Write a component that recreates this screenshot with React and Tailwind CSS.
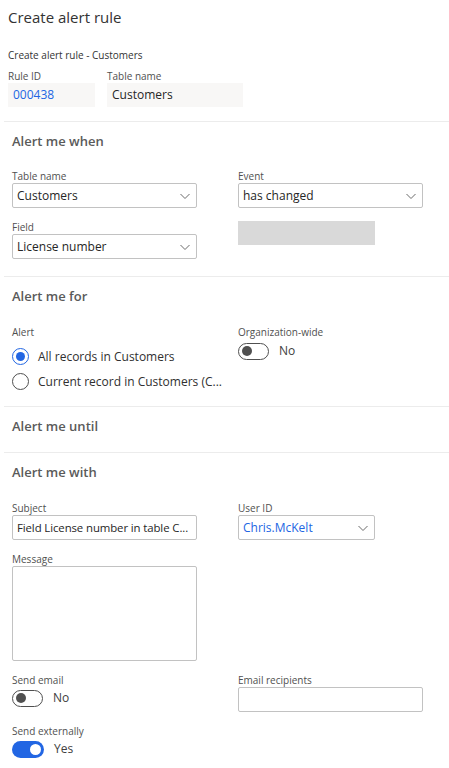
import React from "react";

function Chevron() {
  return (
    <svg width="12" height="12" viewBox="0 0 12 12" className="shrink-0">
      <path d="M1.5 4 L6 8.5 L10.5 4" fill="none" stroke="#6b6b6b" strokeWidth="1" />
    </svg>
  );
}

function Label({ children }) {
  return <div className="text-[10px] leading-[13px] text-[#505050]">{children}</div>;
}

function Dropdown({ value, width = "w-[185px]", blue }) {
  return (
    <div
      className={`${width} h-[25px] border border-[#c2c2c2] rounded-[2px] flex items-center justify-between pl-[4px] pr-[5px] text-[12px] ${blue ? "text-[#2266e3]" : "text-[#262626]"}`}
    >
      <span className="truncate">{value}</span>
      <Chevron />
    </div>
  );
}

function TextBox({ value, width = "w-[185px]", height = "h-[25px]", small }) {
  return (
    <div
      className={`${width} ${height} border border-[#c2c2c2] rounded-[2px] flex items-center px-[4px] ${small ? "text-[11.4px] tracking-[-0.1px]" : "text-[12px]"} text-[#262626]`}
    >
      <span className="whitespace-nowrap overflow-hidden">{value}</span>
    </div>
  );
}

function Toggle({ on, text }) {
  return (
    <div className="flex items-center gap-[10px] h-[18px]">
      {on ? (
        <div className="w-[32px] h-[17px] rounded-full bg-[#2266e3] flex items-center justify-end pr-[3px]">
          <div className="w-[11px] h-[11px] rounded-full bg-white" />
        </div>
      ) : (
        <div className="w-[31px] h-[17px] rounded-full border border-[#505050] flex items-center pl-[3px]">
          <div className="w-[10px] h-[10px] rounded-full bg-[#505050]" />
        </div>
      )}
      <span className="text-[12px] text-[#404040]">{text}</span>
    </div>
  );
}

function Radio({ checked, text }) {
  return (
    <div className="flex items-center gap-[9px] h-[25px]">
      {checked ? (
        <div className="w-[17px] h-[17px] rounded-full border-[1.5px] border-[#2266e3] flex items-center justify-center">
          <div className="w-[9px] h-[9px] rounded-full bg-[#2266e3]" />
        </div>
      ) : (
        <div className="w-[17px] h-[17px] rounded-full border border-[#505050]" />
      )}
      <span className="text-[12px] text-[#303030]">{text}</span>
    </div>
  );
}

function Section({ title, children }) {
  return (
    <div className="ml-[4px] border-t border-[#ececec] pl-[8px] pt-[10px]">
      <div className="text-[13px] leading-[18px] font-semibold text-[#5a5a5a]">{title}</div>
      {children}
    </div>
  );
}

export default function App() {
  return (
    <div
      className="w-[449px] h-[768px] bg-white overflow-hidden text-[#262626]"
      style={{ fontFamily: '"Segoe UI", "Open Sans", "Noto Sans", sans-serif' }}
    >
      <div className="px-[8px] pt-[7px] pb-[14px]">
        <div className="text-[15px] leading-[20px] text-[#333]">Create alert rule</div>
        <div className="mt-[22px] text-[10px] leading-[13px] text-[#333]">Create alert rule - Customers</div>
        <div className="mt-[8px] flex gap-[12px]">
          <div>
            <Label>Rule ID</Label>
            <div className="w-[87px] h-[24px] bg-[#f8f7f6] flex items-center px-[5px] text-[12px] text-[#2266e3]">000438</div>
          </div>
          <div>
            <Label>Table name</Label>
            <div className="w-[136px] h-[24px] bg-[#f8f7f6] flex items-center px-[5px] text-[12px] text-[#262626]">Customers</div>
          </div>
        </div>
      </div>

      <Section title="Alert me when">
        <div className="mt-[20px] grid grid-cols-[226px_1fr] gap-y-[13px]">
          <div>
            <Label>Table name</Label>
            <Dropdown value="Customers" />
          </div>
          <div>
            <Label>Event</Label>
            <Dropdown value="has changed" />
          </div>
          <div>
            <Label>Field</Label>
            <Dropdown value="License number" />
          </div>
          <div>
            <div className="w-[137px] h-[24px] bg-[#d9d9d9]" />
          </div>
        </div>
        <div className="h-[17px]" />
      </Section>

      <Section title="Alert me for">
        <div className="mt-[21px] grid grid-cols-[226px_1fr]">
          <div>
            <Label>Alert</Label>
            <div className="mt-[5px]">
              <Radio checked text="All records in Customers" />
              <Radio text="Current record in Customers (C..." />
            </div>
          </div>
          <div>
            <Label>Organization-wide</Label>
            <div className="mt-[3px]">
              <Toggle text="No" />
            </div>
          </div>
        </div>
        <div className="h-[12px]" />
      </Section>

      <Section title="Alert me until">
        <div className="h-[17px]" />
      </Section>

      <Section title="Alert me with">
        <div className="mt-[21px] grid grid-cols-[226px_1fr] gap-y-[13px]">
          <div>
            <Label>Subject</Label>
            <TextBox value="Field License number in table C..." small />
          </div>
          <div>
            <Label>User ID</Label>
            <Dropdown value="Chris.McKelt" width="w-[137px]" blue />
          </div>
          <div>
            <Label>Message</Label>
            <TextBox value="" height="h-[95px]" />
          </div>
          <div />
          <div>
            <Label>Send email</Label>
            <div className="mt-[2px]">
              <Toggle text="No" />
            </div>
          </div>
          <div>
            <Label>Email recipients</Label>
            <TextBox value="" />
          </div>
          <div>
            <Label>Send externally</Label>
            <div className="mt-[2px]">
              <Toggle on text="Yes" />
            </div>
          </div>
        </div>
      </Section>
    </div>
  );
}
